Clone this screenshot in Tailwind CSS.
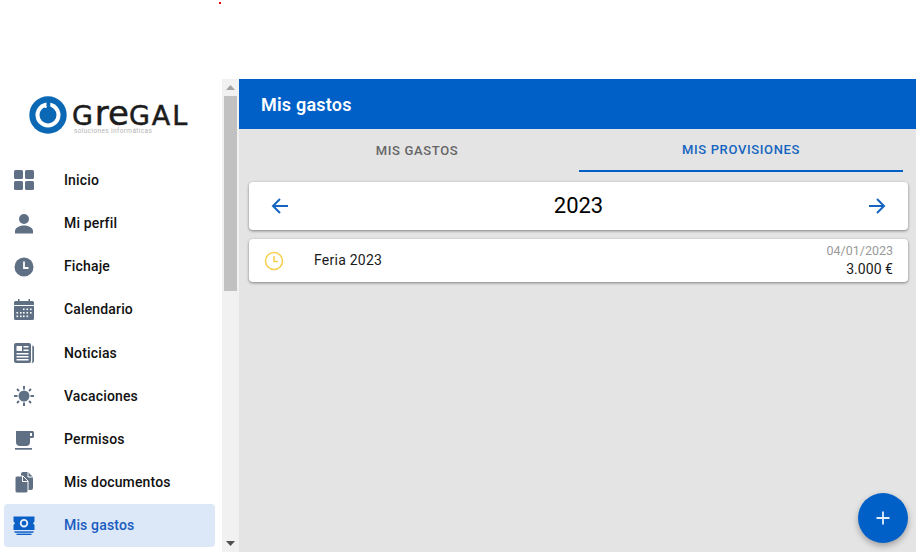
<!DOCTYPE html>
<html lang="es">
<head>
<meta charset="utf-8">
<title>Mis gastos</title>
<script src="https://cdn.jsdelivr.net/npm/@tailwindcss/browser@4"></script>
</head>
<body class="bg-white">
<div class="relative w-[916px] h-[552px] overflow-hidden flex flex-col font-['Roboto',sans-serif] bg-white">
  <div class="absolute left-[219px] top-[2px] w-[2px] h-[2px] bg-red-600"></div>
  <div class="h-[79px] shrink-0"></div>
  <div class="flex flex-1 min-h-0">
    <!-- Sidebar -->
    <aside class="w-[222px] shrink-0 flex flex-col">
      <div class="h-[79.8px] shrink-0 flex items-start pl-[29px] pt-[17px] gap-[5px]">
        <svg width="38" height="38" viewBox="0 0 38 38" class="shrink-0">
          <circle cx="19" cy="19" r="18.700" fill="#0a68b4"/>
          <circle cx="19" cy="19" r="12.500" fill="#fff"/>
          <circle cx="19" cy="19" r="8.500" fill="#0a68b4"/>
          <rect x="17.500" y="4" width="3.800" height="15" fill="#0a68b4"/>
          <rect x="15.500" y="10" width="2" height="2" fill="#fff"/>
        </svg>
        <div class="flex flex-col pt-[2px]">
          <span class="h-[30px] text-[27px] leading-[30px] font-['DejaVu_Sans',sans-serif] text-[#1c1c1c] tracking-[1.900px] whitespace-nowrap [-webkit-text-stroke:0.5px_#1c1c1c]">G<span class="text-[34px] tracking-[0px]">re</span>GAL</span>
          <span class="text-[6.500px] leading-[7px] text-[#b4b4b4] tracking-[0.380px] ml-[2px] whitespace-nowrap">soluciones informáticas</span>
        </div>
      </div>
      <nav class="flex flex-col">
        <a class="mx-[4px] h-[43.2px] flex items-center rounded-[4px] text-[14px] font-medium tracking-[0.15px] text-[#111]">
          <span class="w-[40px] flex justify-center"><svg width="24" height="24" viewBox="0 0 24 24" fill="#5f6f84"><rect x="2" y="2" width="9" height="9" rx="1.500"/><rect x="13" y="2" width="9" height="9" rx="1.500"/><rect x="2" y="13" width="9" height="9" rx="1.500"/><rect x="13" y="13" width="9" height="9" rx="1.500"/></svg></span>
          <span class="ml-[20px]">Inicio</span>
        </a>
        <a class="mx-[4px] h-[43.2px] flex items-center rounded-[4px] text-[14px] font-medium tracking-[0.15px] text-[#111]">
          <span class="w-[40px] flex justify-center"><svg width="24" height="24" viewBox="0 0 24 24" fill="#5f6f84"><circle cx="12" cy="7" r="5"/><path d="M3 21.500V19c0-3 4-5.500 9-5.500s9 2.500 9 5.500v2.500z"/></svg></span>
          <span class="ml-[20px]">Mi perfil</span>
        </a>
        <a class="mx-[4px] h-[43.2px] flex items-center rounded-[4px] text-[14px] font-medium tracking-[0.15px] text-[#111]">
          <span class="w-[40px] flex justify-center"><svg width="24" height="24" viewBox="0 0 24 24"><circle cx="12" cy="12" r="9.500" fill="#5f6f84"/><path d="M12 6.500V13h4.500" fill="none" stroke="#fff" stroke-width="1.800"/></svg></span>
          <span class="ml-[20px]">Fichaje</span>
        </a>
        <a class="mx-[4px] h-[43.2px] flex items-center rounded-[4px] text-[14px] font-medium tracking-[0.15px] text-[#111]">
          <span class="w-[40px] flex justify-center"><svg width="24" height="24" viewBox="0 0 24 24" fill="#5f6f84"><path d="M6 1h1.500v2h9V1H18v2h2.500A1.500 1.500 0 0 1 22 4.500V7H2V4.500A1.500 1.500 0 0 1 3.500 3H6zM2 8h20v12.500a1.500 1.500 0 0 1-1.500 1.500h-17A1.500 1.500 0 0 1 2 20.500z"/><g fill="#fff"><rect x="11" y="10.500" width="1.600" height="1.600"/><rect x="14.500" y="10.500" width="1.600" height="1.600"/><rect x="18" y="10.500" width="1.600" height="1.600"/><rect x="4.500" y="14" width="1.600" height="1.600"/><rect x="8" y="14" width="1.600" height="1.600"/><rect x="11" y="14" width="1.600" height="1.600"/><rect x="14.500" y="14" width="1.600" height="1.600"/><rect x="18" y="14" width="1.600" height="1.600"/><rect x="4.500" y="17.500" width="1.600" height="1.600"/><rect x="8" y="17.500" width="1.600" height="1.600"/><rect x="11" y="17.500" width="1.600" height="1.600"/><rect x="14.500" y="17.500" width="1.600" height="1.600"/></g></svg></span>
          <span class="ml-[20px]">Calendario</span>
        </a>
        <a class="mx-[4px] h-[43.2px] flex items-center rounded-[4px] text-[14px] font-medium tracking-[0.15px] text-[#111]">
          <span class="w-[40px] flex justify-center"><svg width="24" height="24" viewBox="0 0 24 24"><rect x="2" y="2" width="17" height="20" rx="2" fill="#5f6f84"/><path d="M20.300 4.500C21.500 4.700 22 5.500 22 6.500v13.500c0 1.200-1 2-2 2h-.5c.6-.6.800-1.200.800-2z" fill="#5f6f84"/><g fill="#fff"><rect x="4.500" y="5" width="5.500" height="5"/><rect x="11.500" y="5" width="5" height="1.500"/><rect x="11.500" y="8.500" width="5" height="1.500"/><rect x="4.500" y="12" width="12" height="1.500"/><rect x="4.500" y="15" width="12" height="1.500"/><rect x="4.500" y="18" width="12" height="1.500"/></g></svg></span>
          <span class="ml-[20px]">Noticias</span>
        </a>
        <a class="mx-[4px] h-[43.2px] flex items-center rounded-[4px] text-[14px] font-medium tracking-[0.15px] text-[#111]">
          <span class="w-[40px] flex justify-center"><svg width="24" height="24" viewBox="0 0 24 24"><circle cx="12" cy="12" r="5.500" fill="#5f6f84"/><path d="M12 2v3.500M12 18.500V22M2 12h3.500M18.500 12H22M5 5l2 2M17 17l2 2M5 19l2-2M17 7l2-2" stroke="#5f6f84" stroke-width="2" fill="none"/></svg></span>
          <span class="ml-[20px]">Vacaciones</span>
        </a>
        <a class="mx-[4px] h-[43.2px] flex items-center rounded-[4px] text-[14px] font-medium tracking-[0.15px] text-[#111]">
          <span class="w-[40px] flex justify-center"><svg width="24" height="24" viewBox="0 0 24 24" fill="#5f6f84"><path fill-rule="evenodd" d="M4 3h16.500A1.500 1.500 0 0 1 22 4.500v4A1.500 1.500 0 0 1 20.500 10H18v4a4 4 0 0 1-4 4H8a4 4 0 0 1-4-4zM18 5v3h2V5z"/><rect x="3" y="20" width="17" height="1.700"/></svg></span>
          <span class="ml-[20px]">Permisos</span>
        </a>
        <a class="mx-[4px] h-[43.2px] flex items-center rounded-[4px] text-[14px] font-medium tracking-[0.15px] text-[#111]">
          <span class="w-[40px] flex justify-center"><svg width="24" height="24" viewBox="0 0 24 24"><path d="M11 1h5l5 5v11a2 2 0 0 1-2 2h-8a2 2 0 0 1-2-2V3a2 2 0 0 1 2-2z" fill="#5f6f84"/><path d="M16 1v5h5" fill="none" stroke="#fff" stroke-width="1"/><path d="M5 5h6l5 5v10a2 2 0 0 1-2 2H5a2 2 0 0 1-2-2V7a2 2 0 0 1 2-2z" fill="#5f6f84" stroke="#fff" stroke-width="1"/><path d="M10.500 5v5.500H16" fill="none" stroke="#fff" stroke-width="1"/></svg></span>
          <span class="ml-[20px]">Mis documentos</span>
        </a>
        <a class="mx-[4px] w-[211px] h-[43.2px] flex items-center rounded-[4px] text-[14px] font-medium tracking-[0.15px] text-[#1a5cc0] bg-[#dce8f8]">
          <span class="w-[40px] flex justify-center"><svg width="24" height="24" viewBox="0 0 24 24"><path d="M1.500 2.500h21v5L21 9.200l1.500 1.700V16h-21v-5.100L3 9.200 1.500 7.500z" fill="#0b60c8"/><circle cx="12" cy="9.200" r="3.300" fill="none" stroke="#e8f0fb" stroke-width="1.800"/><rect x="2.500" y="17.300" width="19" height="1.500" fill="#0b60c8"/><rect x="4.500" y="19.600" width="15" height="1.400" fill="#0b60c8"/></svg></span>
          <span class="ml-[20px]">Mis gastos</span>
        </a>
      </nav>
    </aside>
    <!-- Scrollbar -->
    <div class="w-[17px] shrink-0 bg-[#f1f1f1] flex flex-col items-center">
      <div class="h-[17px] w-full flex items-center justify-center"><svg width="9" height="5" viewBox="0 0 9 5"><path d="M4.500 0 9 5H0z" fill="#a3a3a3"/></svg></div>
      <div class="w-[13px] h-[195px] bg-[#c1c1c1]"></div>
      <div class="flex-1"></div>
      <div class="h-[17px] w-full flex items-center justify-center"><svg width="9" height="5" viewBox="0 0 9 5"><path d="M0 0h9L4.500 5z" fill="#505050"/></svg></div>
    </div>
    <!-- Main -->
    <main class="relative flex-1 min-w-0 bg-[#e4e4e4] flex flex-col">
      <header class="h-[50px] shrink-0 bg-[#0060c7] flex items-center pl-[22px] text-white text-[18px] font-semibold tracking-[0.2px]">Mis gastos</header>
      <div class="h-[43px] shrink-0 flex pl-[16px] pr-[13px] text-[13px] font-medium tracking-[0.65px]">
        <div class="flex-1 flex items-center justify-center pt-[1px] text-[#666]">MIS GASTOS</div>
        <div class="flex-1 flex items-center justify-center pt-[1px] text-[#1565c0] border-b-2 border-[#0060c7]">MIS PROVISIONES</div>
      </div>
      <div class="mt-[10px] ml-[10px] mr-[8px] h-[48px] bg-white rounded-[4px] shadow-[0_1px_3px_rgba(0,0,0,0.45)] flex items-center justify-between px-[19px]">
        <svg width="24" height="24" viewBox="0 0 24 24"><path d="M20 12H5M12 5l-7 7 7 7" fill="none" stroke="#1565c0" stroke-width="2"/></svg>
        <span class="text-[22px] font-normal text-black -mt-[1px]">2023</span>
        <svg width="24" height="24" viewBox="0 0 24 24"><path d="M4 12h15M12 5l7 7-7 7" fill="none" stroke="#1565c0" stroke-width="2"/></svg>
      </div>
      <div class="mt-[9px] ml-[10px] mr-[8px] h-[43px] bg-white rounded-[4px] shadow-[0_1px_3px_rgba(0,0,0,0.45)] flex items-center pl-[13px] pr-[15px]">
        <svg width="24" height="24" viewBox="0 0 24 24" class="shrink-0"><circle cx="12" cy="12" r="8.500" fill="none" stroke="#f5cf4a" stroke-width="1.500"/><path d="M12 7v5.500h4" fill="none" stroke="#f5cf4a" stroke-width="1.500"/></svg>
        <span class="ml-[28px] text-[14px] tracking-[0.25px] text-[#1a1a1a]">Feria 2023</span>
        <div class="ml-auto flex flex-col items-end">
          <span class="text-[12.500px] leading-[18px] tracking-[0px] text-[#9a9a9a]">04/01/2023</span>
          <span class="text-[14px] leading-[20px] -mt-[1px] mb-[1px] tracking-[0.05px] font-normal text-[#1a1a1a]">3.000 €</span>
        </div>
      </div>
      <button class="absolute left-[619px] top-[414px] w-[50px] h-[50px] rounded-full bg-[#0060c7] shadow-[0_3px_6px_rgba(0,0,0,0.3)] flex items-center justify-center">
        <svg width="24" height="24" viewBox="0 0 24 24"><path d="M12 5.500v13M5.500 12h13" stroke="#e3f0fb" stroke-width="1.800" fill="none"/></svg>
      </button>
    </main>
  </div>
</div>
</body>
</html>
